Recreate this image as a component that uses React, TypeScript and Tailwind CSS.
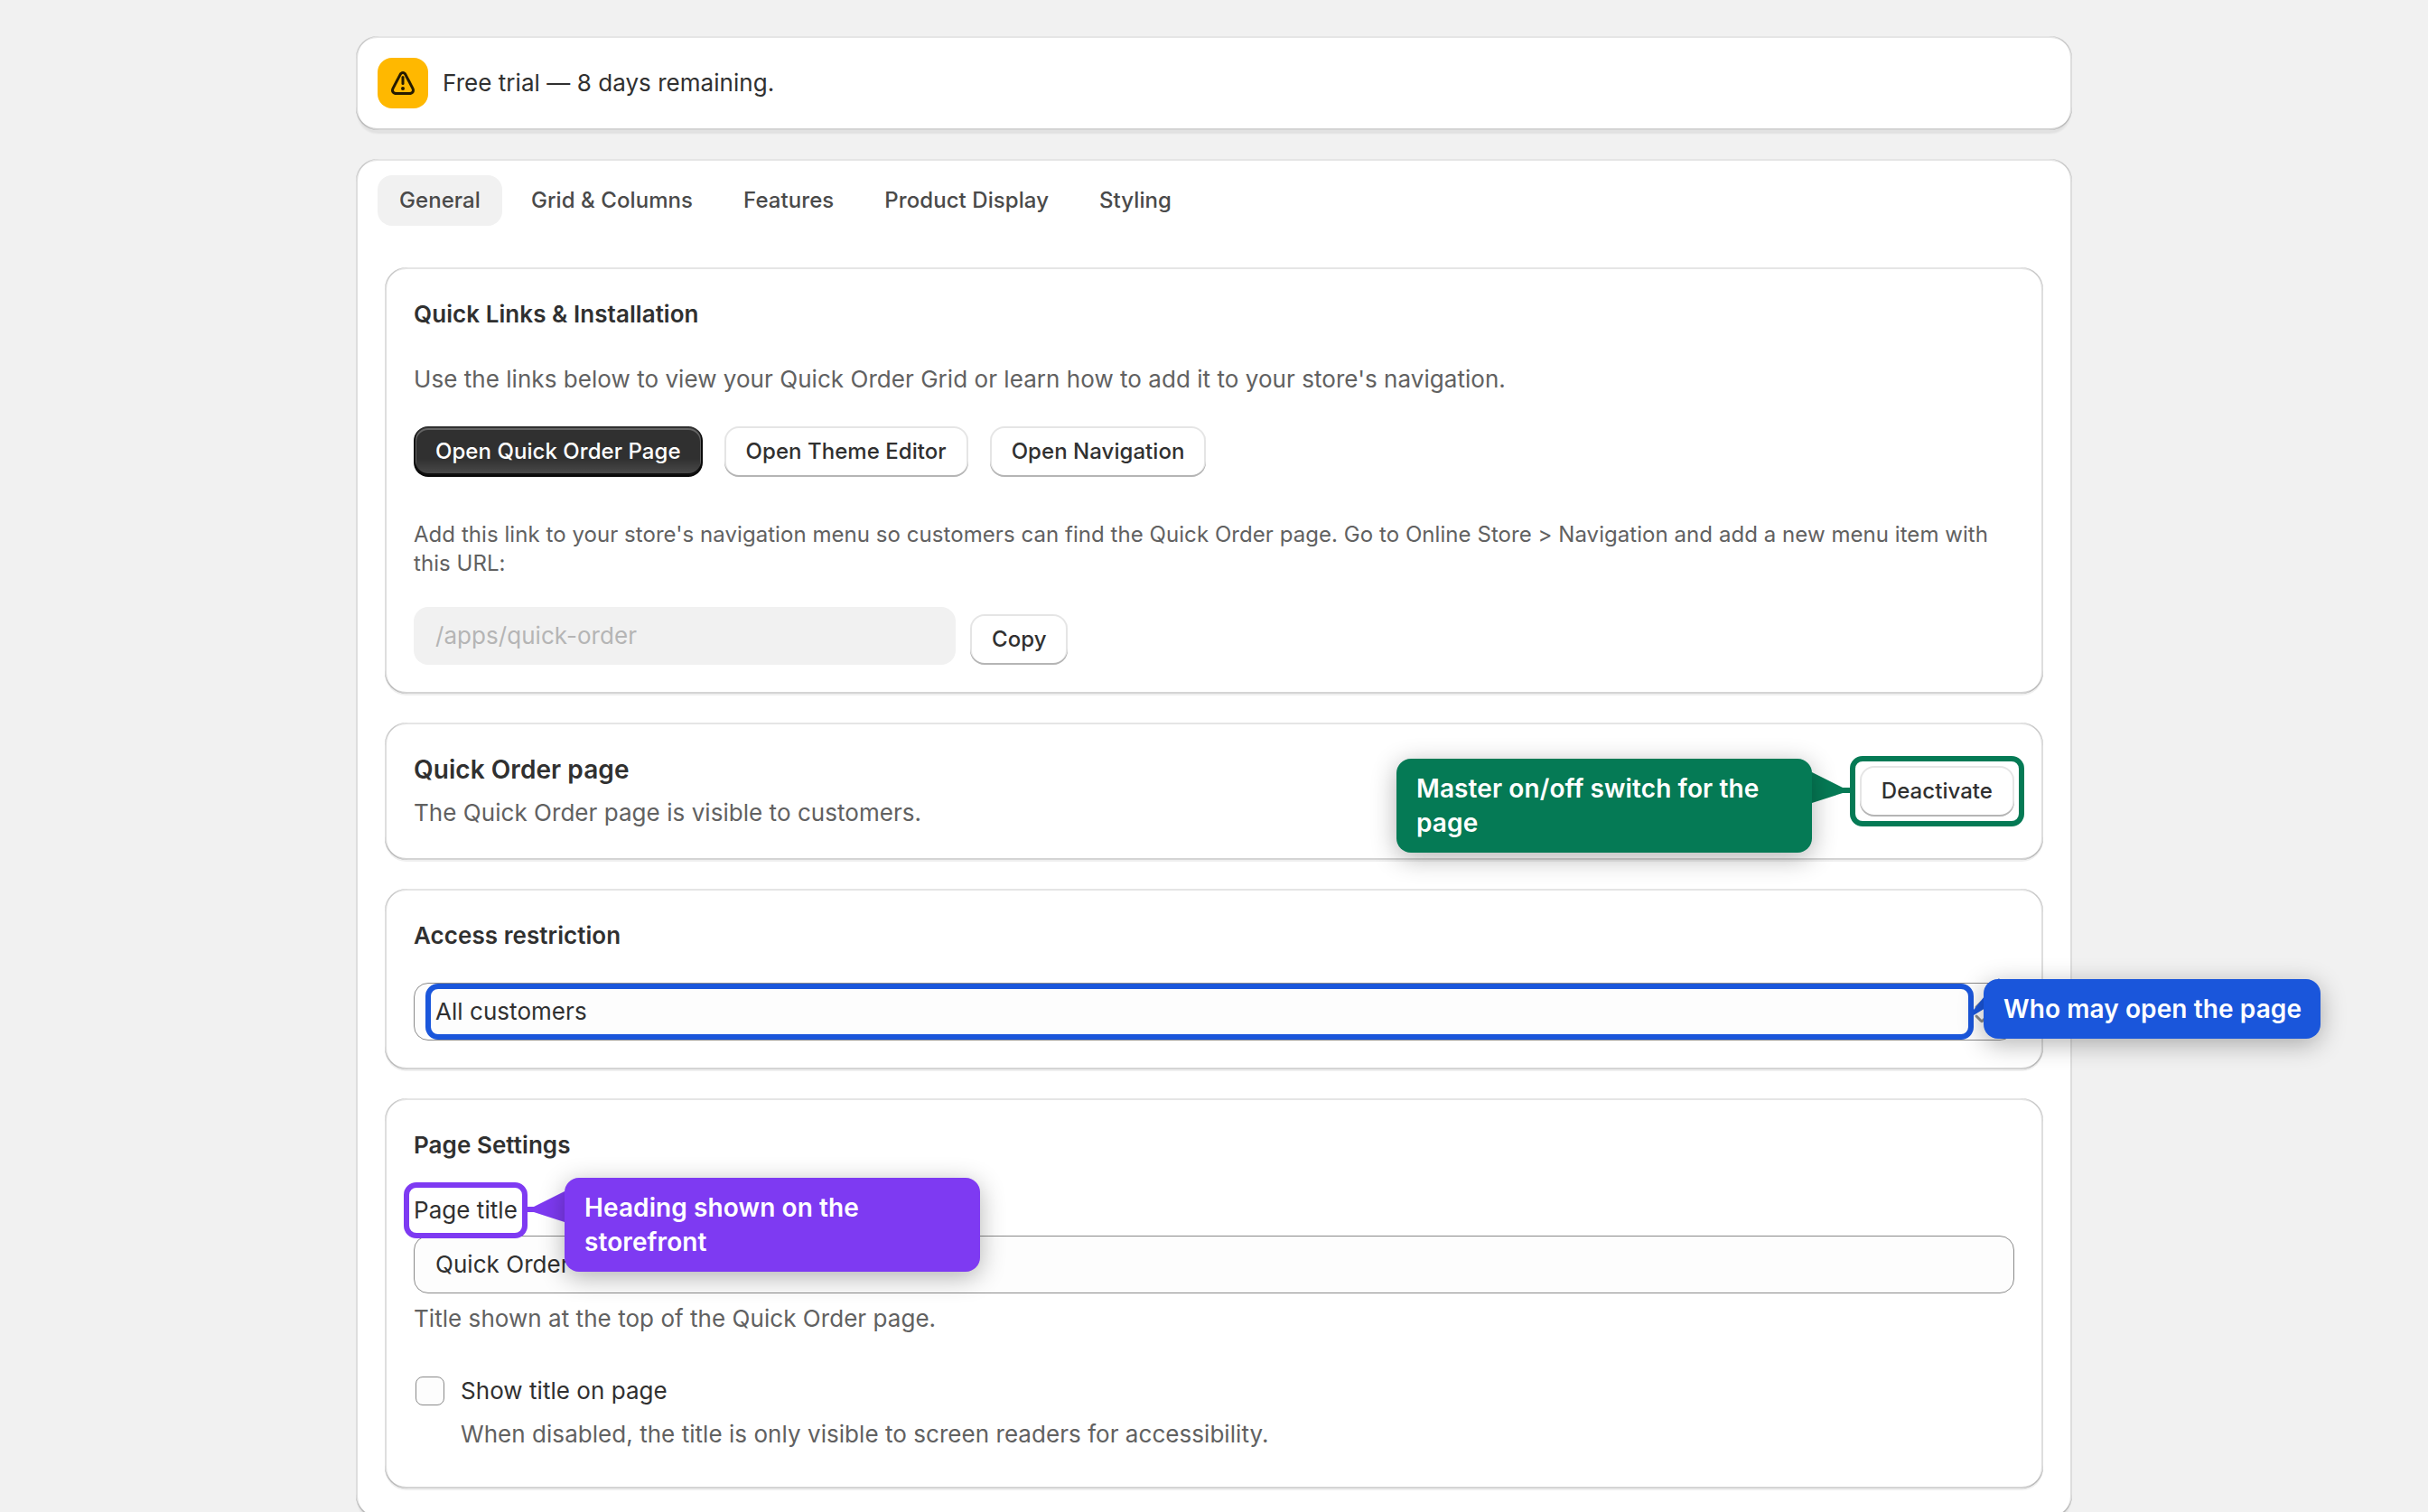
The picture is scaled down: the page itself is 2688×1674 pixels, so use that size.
import type { ReactNode } from "react";
import clsx from "clsx";

const tabs = ["General", "Grid & Columns", "Features", "Product Display", "Styling"];

const bevel =
  "shadow-[inset_2px_0_0_0_rgba(0,0,0,0.13),inset_-2px_0_0_0_rgba(0,0,0,0.13),inset_0_-2px_0_0_rgba(0,0,0,0.17),inset_0_2px_0_0_rgba(204,204,204,0.5),0_2px_0_0_rgba(26,26,26,0.07)]";
const raised =
  "shadow-[inset_2px_0_0_0_rgba(0,0,0,0.13),inset_-2px_0_0_0_rgba(0,0,0,0.13),inset_0_-2px_0_0_rgba(0,0,0,0.17),inset_0_2px_0_0_rgba(204,204,204,0.5),0_6px_2px_-2px_rgba(26,26,26,0.07)]";

const Card = ({ children, className }: { children: ReactNode; className?: string }) => (
  <section className={clsx("rounded-3xl bg-white p-8", bevel, className)}>{children}</section>
);

const Button = ({ children, primary }: { children: ReactNode; primary?: boolean }) => (
  <button
    className={clsx(
      "h-14 shrink-0 rounded-2xl px-6 text-[24px] leading-8 font-medium tracking-[0.05px] whitespace-nowrap",
      primary
        ? "bg-[#303030] bg-[linear-gradient(180deg,rgba(48,48,48,0)_63.53%,rgba(255,255,255,0.15)_100%)] text-white shadow-[inset_0_-2px_0_2px_rgba(0,0,0,0.8),inset_0_0_0_2px_#303030,inset_0_1px_0_3px_rgba(255,255,255,0.25)]"
        : "bg-white text-[#303030] shadow-[inset_0_-2px_0_0_#b5b5b5,inset_0_0_0_2px_rgba(0,0,0,0.1),inset_0_1px_0_3px_#fff]"
    )}
  >
    {children}
  </button>
);

const Heading = ({ children }: { children: ReactNode }) => (
  <h2 className="text-[26px] leading-10 font-semibold tracking-[0.06px]">{children}</h2>
);

const Callout = ({ children, className }: { children: ReactNode; className?: string }) => (
  <div
    className={clsx(
      "absolute z-20 rounded-2xl px-[22px] pt-[15px] pb-[13px] text-[28px] leading-[37.8px] font-semibold tracking-[0.1px] text-white shadow-[0_6px_28px_rgba(0,0,0,0.3)]",
      className
    )}
  >
    {children}
  </div>
);

const AlertIcon = () => (
  <svg viewBox="0 0 20 20" className="size-10" fill="#251a00">
    <path d="M10 6a.75.75 0 0 1 .75.75v3.5a.75.75 0 0 1-1.5 0v-3.5a.75.75 0 0 1 .75-.75" />
    <path d="M11 13a1 1 0 1 1-2 0 1 1 0 0 1 2 0" />
    <path
      fillRule="evenodd"
      d="M10 3.5c-1.045 0-1.784.702-2.152 1.447a449 449 0 0 1-2.005 3.847l-.028.052a403 403 0 0 0-2.008 3.856c-.372.752-.478 1.75.093 2.614.57.863 1.542 1.184 2.464 1.184h7.272c.922 0 1.895-.32 2.464-1.184.57-.864.465-1.862.093-2.614-.21-.424-1.113-2.147-2.004-3.847l-.032-.061a430 430 0 0 1-2.005-3.847c-.368-.745-1.107-1.447-2.152-1.447m-.808 2.112c.404-.816 1.212-.816 1.616 0 .202.409 1.112 2.145 2.022 3.88a419 419 0 0 1 2.018 3.875c.404.817 0 1.633-1.212 1.633h-7.272c-1.212 0-1.617-.816-1.212-1.633.202-.408 1.113-2.147 2.023-3.883a421 421 0 0 0 2.017-3.872"
    />
  </svg>
);

const SelectIcon = () => (
  <svg viewBox="0 0 20 20" className="size-10" fill="#8a8a8a">
    <path d="M9.116 4.323a1.25 1.25 0 0 1 1.768 0l2.646 2.647a.75.75 0 0 1-1.06 1.06l-2.47-2.47-2.47 2.47a.75.75 0 1 1-1.06-1.06z" />
    <path d="M9.116 15.677a1.25 1.25 0 0 0 1.768 0l2.646-2.647a.75.75 0 0 0-1.06-1.06l-2.47 2.47-2.47-2.47a.75.75 0 0 0-1.06 1.06z" />
  </svg>
);

export default function App() {
  return (
    <div className="h-[1674px] overflow-hidden bg-[#f1f1f1] font-['Inter',sans-serif] text-[26px] leading-10 font-normal tracking-[0.045px] text-[#303030]">
      <main className="mx-auto flex w-[1900px] flex-col gap-8 pt-10">
        <div className={clsx("flex h-[104px] items-center gap-4 rounded-3xl bg-white px-6", raised)}>
          <div className="flex size-14 items-center justify-center rounded-2xl bg-[#ffb800]">
            <AlertIcon />
          </div>
          <p>Free trial — 8 days remaining.</p>
        </div>

        <div className={clsx("h-[1504px] rounded-3xl bg-white", raised)}>
          <nav className="flex gap-2 px-6 pt-[18px]">
            {tabs.map((tab, i) => (
              <button
                key={tab}
                className={clsx(
                  "h-14 rounded-2xl px-6 text-[24px] leading-8 font-[550] tracking-[0.07px] text-[#4a4a4a]",
                  i === 0 && "bg-[#f1f1f1]"
                )}
              >
                {tab}
              </button>
            ))}
          </nav>

          <div className="flex flex-col gap-8 px-8 pt-[46px]">
            <Card>
              <Heading>Quick Links & Installation</Heading>
              <p className="mt-8 text-[#616161]">
                Use the links below to view your Quick Order Grid or learn how to add it to your store's navigation.
              </p>
              <div className="mt-8 flex gap-6">
                <Button primary>Open Quick Order Page</Button>
                <Button>Open Theme Editor</Button>
                <Button>Open Navigation</Button>
              </div>
              <p className="mt-12 text-[24px] leading-8 tracking-[0.055px] text-[#616161]">
                Add this link to your store's navigation menu so customers can find the Quick Order page. Go to Online
                Store &gt; Navigation and add a new menu item with this URL:
              </p>
              <div className="mt-8 flex items-end gap-4">
                <div className="h-16 w-[600px] rounded-2xl bg-[#f1f1f1] px-6 leading-[64px] text-[#b5b5b5]">
                  /apps/quick-order
                </div>
                <Button>Copy</Button>
              </div>
            </Card>

            <Card className="relative flex items-center justify-between">
              <div>
                <h2 className="text-[28px] leading-10 font-semibold tracking-[0.06px]">Quick Order page</h2>
                <p className="mt-2 text-[#616161]">The Quick Order page is visible to customers.</p>
              </div>
              <div className="relative">
                <Button>Deactivate</Button>
                <div className="absolute -inset-x-[11px] -inset-y-[11px] rounded-[14px] border-6 border-[#057a55]" />
              </div>
              <svg className="absolute top-[55px] right-[213px] z-10 h-[34px] w-[43px]" fill="#057a55">
                <path d="M0 0 34 17h9v6h-9L0 34z" />
              </svg>
              <Callout className="top-10 right-64 w-[460px] bg-[#057a55]">Master on/off switch for the page</Callout>
            </Card>

            <Card className="relative">
              <Heading>Access restriction</Heading>
              <div className="relative mt-8 flex h-16 items-center justify-between rounded-2xl border border-[#8a8a8a] bg-[#fdfdfd] pr-[15px] pl-[23px]">
                <span>All customers</span>
                <SelectIcon />
                <div className="absolute inset-y-0 right-[44px] left-[12px] rounded-[14px] border-6 border-[#1a56db]" />
              </div>
              <svg className="absolute top-[99px] left-[1759px] z-10 h-[42px] w-[46px]" fill="#1a56db">
                <path d="M0 35 28 0l17 30H18L0 41z" />
              </svg>
              <Callout className="top-[100px] left-[1770px] w-[373px] bg-[#1a56db] whitespace-nowrap">
                Who may open the page
              </Callout>
            </Card>

            <Card className="relative h-[432px]">
              <Heading>Page Settings</Heading>
              <div className="relative mt-8 w-fit">
                Page title
                <div className="absolute -inset-x-[11px] -inset-y-[11px] rounded-[14px] border-6 border-[#7e3af2]" />
              </div>
              <div className="mt-2 h-16 rounded-2xl border border-[#8a8a8a] bg-[#fdfdfd] px-[23px] leading-[62px]">
                Quick Order
              </div>
              <p className="mt-2 text-[#616161]">Title shown at the top of the Quick Order page.</p>
              <div className="mt-10 flex gap-[18px] pl-0.5">
                <div className="mt-1 size-8 rounded-lg border border-[#8a8a8a] bg-[#fdfdfd]" />
                <div>
                  <p>Show title on page</p>
                  <p className="mt-2 text-[#616161]">
                    When disabled, the title is only visible to screen readers for accessibility.
                  </p>
                </div>
              </div>
              <svg className="absolute top-[103px] left-[157px] z-10 h-[34px] w-[42px]" fill="#7e3af2">
                <path d="M42 0 8 17H0v6h8L42 34z" />
              </svg>
              <Callout className="top-[88px] left-[199px] w-[460px] bg-[#7e3af2]">
                Heading shown on the storefront
              </Callout>
            </Card>
          </div>
        </div>
      </main>
    </div>
  );
}
